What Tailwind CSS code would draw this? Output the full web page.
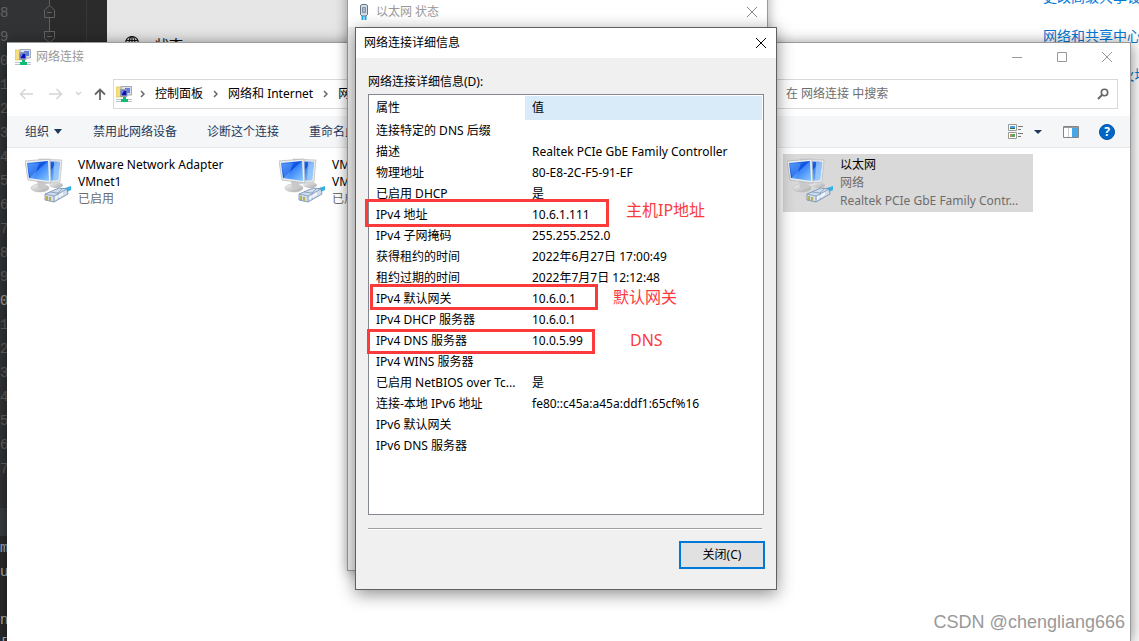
<!DOCTYPE html>
<html lang="zh-CN">
<head>
<meta charset="utf-8">
<title>网络连接</title>
<script src="https://cdn.jsdelivr.net/npm/@tailwindcss/browser@4"></script>
</head>
<body class="relative h-screen overflow-hidden bg-white font-['Noto_Sans','Noto_Sans_CJK_SC',sans-serif] text-[12px] leading-4 text-black">

<svg class="absolute h-0 w-0" aria-hidden="true">
  <defs>
    <linearGradient id="scr" x1="0" y1="0" x2="1" y2="1"><stop offset="0" stop-color="#4a94ff"/><stop offset=".45" stop-color="#0a50e0"/><stop offset=".5" stop-color="#3b86f8"/><stop offset="1" stop-color="#8ccbff"/></linearGradient>
    <linearGradient id="base" x1="0" y1="0" x2="1" y2="1"><stop offset="0" stop-color="#f4f4f4"/><stop offset="1" stop-color="#a9a9a9"/></linearGradient>
  </defs>
  <symbol id="adapter" viewBox="0 0 48 48">
    <ellipse cx="31" cy="27" rx="7" ry="3" fill="url(#base)"/>
    <path d="M14 1 37 2 35 24 17 26z" fill="#e4e6e8" stroke="#b4b8bc" stroke-width=".6"/>
    <path d="M16 3 35 4 33 22 18 23z" fill="url(#scr)"/>
    <path d="M29 4h6l-2 18-5 1z" fill="#a9d3fb" opacity=".7"/>
    <ellipse cx="15" cy="30" rx="9" ry="4" fill="url(#base)" stroke="#b5b5b5" stroke-width=".5"/>
    <path d="M12 23h8v7h-7z" fill="#c9c9c9"/>
    <path d="M0 3 25 1 26 25 3 22z" fill="#eceeef" stroke="#aeb2b6" stroke-width=".7"/>
    <path d="M2 5 23 3 24 23 4 20z" fill="url(#scr)"/>
    <path d="M3 6 14 5 9 20 5 20z" fill="#6caeff" opacity=".45"/>
    <path d="M37 31 46 28v4l-8 4z" fill="#32b1e2"/>
    <path d="M20 36 34 30 42 31 43 36 29 44 20 42z" fill="#cfdcec" stroke="#6e89ad" stroke-width=".8"/>
    <path d="M20 36 29 38 42 31M29 38v6M25 34l8 1 4-4M33 35v6" fill="none" stroke="#7e98ba" stroke-width=".8"/>
    <path d="M21 38h2v4h-2zm3 1h2v4h-2z" fill="#b9ae55"/>
    <path d="m30 39 8-5v3l-8 5z" fill="#fff" opacity=".7"/>
  </symbol>
  <symbol id="netfolder" viewBox="0 0 16 16">
    <path d="M0 1h6l1 1h3v9H0z" fill="#f5df7e" stroke="#d6b84e" stroke-width=".6"/>
    <path d="M5 .5h10.5V9H9L5 7z" fill="#dcdfe5" stroke="#8e97a8" stroke-width=".8"/>
    <path d="M9 2h5v5H9z" fill="#5a7fe0"/>
    <path d="M4.500 3.500h6.500v7H4.500z" fill="#c9cfde" stroke="#7d879b" stroke-width=".7"/>
    <path d="M5.500 4.500h5v5h-5z" fill="#0914b0"/>
    <path d="M6 5h2L6 8z" fill="#6c8df0"/>
    <path d="M7 11h3v2h2v3H5v-3h2z" fill="#12bb74"/>
    <path d="M0 13.500h5M12 13.500h4M0 15.500h5M12 15.500h4" stroke="#a8b5b9" stroke-width=".8"/>
  </symbol>
  <symbol id="chev" viewBox="0 0 5 8"><path d="m1 1 3 3-3 3" fill="none" stroke="#666" stroke-width="1.500"/></symbol>
</svg>

<!-- code editor -->
<div class="absolute inset-y-0 left-0 w-[107px] bg-[#2b2b2b] font-['Liberation_Mono',monospace] text-[14px] leading-6 text-[#606366]">
  <div class="flex h-[508px]">
    <div class="flex w-[50px] flex-col bg-[#313335] pt-px">
      <span>8</span><span>9</span><span>0</span><span>1</span><span>2</span><span>3</span><span>4</span><span>5</span><span>6</span><span>7</span><span>8</span><span>9</span><span class="text-[#a4a3a3]">0</span><span>1</span><span>2</span><span>3</span><span>4</span><span>5</span><span>6</span><span>7</span>
    </div>
    <div class="w-[37px] border-r border-[#373737]"></div>
  </div>
  <div class="h-7 bg-[#3a3e40]"></div>
  <div class="flex flex-col text-[#a9b7c6]"><span>m</span><span>u</span><span>&nbsp;</span><span>n</span><span>[</span></div>
  <svg class="absolute top-0 left-[43px] h-[43px] w-3" viewBox="0 0 12 43" fill="none" stroke="#606366"><path d="M6.500 0v5M1.500 17.500V10l5-4.500 5 4.500v7.500zM4 12.500h5M6.500 18v13M1.500 31.500h10v7l-5 4-5-4zM4 36.500h5"/></svg>
</div>

<!-- settings -->
<div class="absolute inset-y-0 right-0 left-[107px] flex justify-between bg-white text-[14px] leading-5">
  <div class="flex w-[241px] items-start gap-[15px] bg-[#e6e6e6] pt-[35px] pl-[17px]">
    <svg class="h-4 w-4" viewBox="0 0 16 16" fill="none" stroke="#111" stroke-width="1.200"><circle cx="8" cy="8" r="6.500"/><ellipse cx="8" cy="8" rx="3" ry="6.500"/><path d="M2 5.500h12M2 10.500h12M8 1v14"/></svg>
    <span>状态</span>
  </div>
  <div class="-mt-[13px] flex w-24 flex-col gap-[19px] whitespace-nowrap text-[#0078d7]">
    <a href="#">更改高级共享设置</a>
    <a href="#">网络和共享中心</a>
    <a href="#">Windows 防火墙</a>
  </div>
</div>

<!-- explorer window -->
<section class="absolute top-[42px] right-2 bottom-0 left-[7px] flex flex-col border-t border-r border-[#9a9a9a] bg-white shadow-[0_2px_14px_rgba(0,0,0,0.5)]">
  <header class="flex h-7 items-center pl-2 text-[#999]">
    <svg class="mr-[5px] h-4 w-4"><use href="#netfolder"/></svg>
    <h1 class="flex-1">网络连接</h1>
    <div class="flex gap-[35px] pr-[18px]">
      <button aria-label="最小化"><svg class="h-[10px] w-[10px]" fill="none" stroke="#999"><path d="M0 5.500h10"/></svg></button>
      <button aria-label="最大化"><svg class="h-[10px] w-[10px]" fill="none" stroke="#999"><path d="M.5.5h9v9h-9z"/></svg></button>
      <button aria-label="关闭"><svg class="h-[10px] w-[10px]" fill="none" stroke="#999"><path d="m0 0 10 10M10 0 0 10"/></svg></button>
    </div>
  </header>
  <nav class="flex h-[45px] items-center pr-3 pl-3">
    <button aria-label="后退"><svg class="h-3 w-[14px]" fill="none" stroke="#d5d5d5" stroke-width="1.500"><path d="M14 6H1.500M6.500 1l-5 5 5 5"/></svg></button>
    <button aria-label="前进" class="ml-4"><svg class="h-3 w-[14px]" fill="none" stroke="#d5d5d5" stroke-width="1.500"><path d="M0 6h12.500M7.500 1l5 5-5 5"/></svg></button>
    <button aria-label="最近" class="ml-3"><svg class="h-2 w-[7px]" fill="none" stroke="#d5d5d5" stroke-width="1.500"><path d="m1 2 2.500 2.500L6 2"/></svg></button>
    <button aria-label="上移" class="ml-3"><svg class="h-3 w-3" fill="none" stroke="#666" stroke-width="1.800"><path d="M6 12V1.500M1 6.500l5-5 5 5"/></svg></button>
    <div class="ml-[7px] flex h-[30px] flex-1 items-center overflow-hidden border border-[#d9d9d9] pl-[2px] whitespace-nowrap">
      <svg class="h-4 w-4"><use href="#netfolder"/></svg>
      <svg class="ml-2 h-2 w-[5px]"><use href="#chev"/></svg>
      <a href="#" class="ml-[10px]">控制面板</a>
      <svg class="ml-[10px] h-2 w-[5px]"><use href="#chev"/></svg>
      <a href="#" class="ml-[10px]">网络和 Internet</a>
      <svg class="ml-[10px] h-2 w-[5px]"><use href="#chev"/></svg>
      <a href="#" class="ml-[10px]">网络连接</a>
    </div>
    <label class="ml-3 flex h-[30px] w-[350px] items-center border border-[#d9d9d9] pr-2 pl-[17px]">
      <input type="search" aria-label="搜索" placeholder="在 网络连接 中搜索" class="min-w-0 flex-1 outline-none placeholder:text-[#6d6d6d]">
      <svg class="h-3 w-3" fill="none" stroke="#666"><circle cx="7.500" cy="4.500" r="3.200" stroke-width="1.600"/><path d="M5 7 1 11" stroke-width="2"/></svg>
    </label>
  </nav>
  <div class="flex h-8 items-center border-b border-[#e5e8eb] bg-[#f5f6f7] pr-[15px] pl-[18px] text-[#1e395b]">
    <button class="flex items-center gap-[5px]">组织<svg class="h-[5px] w-2" fill="#1e395b"><path d="M0 0h8L4 5z"/></svg></button>
    <button class="ml-[31px]">禁用此网络设备</button>
    <button class="ml-[30px]">诊断这个连接</button>
    <button class="ml-[30px]">重命名此连接</button>
    <div class="ml-auto flex items-center">
      <button aria-label="视图"><svg class="h-[15px] w-4"><path d="M.5.500h8v6h-8zM.5 8.500h8v6h-8z" fill="#fff" stroke="#999"/><path d="M2 2h5v3H2z" fill="#4a9fe0"/><path d="M2 4h5v1H2z" fill="#2d7348"/><path d="M2 10h3v3H2z" fill="#c58a50"/><path d="M4 10h3v3H4z" fill="#5aa860"/><path d="M10 2.500h5M10 5.500h3M10 9.500h5M10 12.500h3" stroke="#777"/></svg></button>
      <button aria-label="更多视图" class="ml-[10px]"><svg class="h-1 w-2" fill="#1e395b"><path d="M0 0h8L4 4z"/></svg></button>
      <button aria-label="预览窗格" class="ml-[21px]"><svg class="h-3 w-4"><path d="M.5.500h15v11H.500z" fill="#fff" stroke="#858585"/><path d="M1 1h14v1H1z" fill="#999"/><path d="M5.500 2v9" stroke="#ccc"/><path d="M9 2h6v9H9z" fill="#45a6e8"/></svg></button>
      <button aria-label="帮助" class="ml-5 h-4 w-4 rounded-full border border-[#0052a5] bg-[#0067c8] text-[12px] leading-[14px] font-bold text-white">?</button>
    </div>
  </div>
  <main class="grid grid-cols-[repeat(4,250px)] gap-1 py-[6px] pl-[14px]">
    <article class="flex h-[58px] gap-[5px] pl-1"><svg class="mt-1 h-12 w-12 shrink-0"><use href="#adapter"/></svg>
      <div class="min-w-0 pt-[2px] leading-[17px]"><p class="w-[170px]">VMware Network Adapter VMnet1</p><p class="text-[#6d6d6d]">已启用</p></div></article>
    <article class="flex h-[58px] gap-[5px] pl-1"><svg class="mt-1 h-12 w-12 shrink-0"><use href="#adapter"/></svg>
      <div class="min-w-0 pt-[2px] leading-[17px]"><p class="w-[170px]">VMware Network Adapter VMnet8</p><p class="text-[#6d6d6d]">已启用</p></div></article>
    <article class="col-start-4 flex h-[58px] gap-[5px] bg-[#d9d9d9] pl-1"><svg class="mt-1 h-12 w-12 shrink-0"><use href="#adapter"/></svg>
      <div class="min-w-0 pt-[2px] leading-[18px]"><p>以太网</p><p class="text-[#6d6d6d]">网络</p><p class="truncate text-[#6d6d6d]">Realtek PCIe GbE Family Contr...</p></div></article>
  </main>
</section>

<!-- status window -->
<section class="absolute -top-5 left-[347px] h-[591px] w-[421px] border border-[#999] bg-[#f0f0f0] shadow-[0_2px_12px_rgba(0,0,0,0.35)]">
  <header class="flex h-[46px] items-center bg-white px-[10px] pt-4 text-[#999]">
    <svg class="mr-[6px] h-[17px] w-3" fill="none"><path d="M2.500 1.500 4 .5h4l1.500 1v9L8 12H4l-1.500-1.500z" fill="#d4dce8" stroke="#66778c"/><path d="M4.500 3.500h3v5h-3zM6 4v4" stroke="#8593a8"/><path d="M4.500 12v4M7.500 12v4" stroke="#22a7df" stroke-width="2"/></svg>
    <h2 class="flex-1">以太网 状态</h2>
    <button aria-label="关闭"><svg class="h-[10px] w-[10px]" fill="none" stroke="#888"><path d="m0 0 10 10M10 0 0 10"/></svg></button>
  </header>
</section>

<!-- details dialog -->
<section role="dialog" aria-labelledby="dlg" class="absolute top-[27px] left-[355px] w-[422px] border border-[#606060] bg-[#f0f0f0] shadow-[0_4px_16px_rgba(0,0,0,0.45)]">
  <header class="flex h-[30px] items-center justify-between bg-white pr-[10px] pl-2">
    <h2 id="dlg">网络连接详细信息</h2>
    <button aria-label="关闭"><svg class="h-[10px] w-[10px]" fill="none" stroke="#000"><path d="m0 0 10 10M10 0 0 10"/></svg></button>
  </header>
  <div class="px-3 pt-4 pb-5">
    <h3 id="lst" class="mb-1">网络连接详细信息(D):</h3>
    <div class="h-[421px] border border-[#828790] bg-white p-px pl-0">
      <table aria-labelledby="lst" class="w-full table-fixed text-left">
        <thead><tr class="h-6"><th class="w-[156px] px-0 pl-[7px] font-normal">属性</th><th class="bg-[#d9ebf9] pl-[7px] font-normal">值</th></tr></thead>
        <tbody class="[&_td]:truncate [&_td]:pl-[7px] [&_tr]:h-[21px]">
          <tr><td>连接特定的 DNS 后缀</td><td></td></tr>
          <tr><td>描述</td><td>Realtek PCIe GbE Family Controller</td></tr>
          <tr><td>物理地址</td><td>80-E8-2C-F5-91-EF</td></tr>
          <tr><td>已启用 DHCP</td><td>是</td></tr>
          <tr><td>IPv4 地址</td><td>10.6.1.111</td></tr>
          <tr><td>IPv4 子网掩码</td><td>255.255.252.0</td></tr>
          <tr><td>获得租约的时间</td><td>2022年6月27日 17:00:49</td></tr>
          <tr><td>租约过期的时间</td><td>2022年7月7日 12:12:48</td></tr>
          <tr><td>IPv4 默认网关</td><td>10.6.0.1</td></tr>
          <tr><td>IPv4 DHCP 服务器</td><td>10.6.0.1</td></tr>
          <tr><td>IPv4 DNS 服务器</td><td>10.0.5.99</td></tr>
          <tr><td>IPv4 WINS 服务器</td><td></td></tr>
          <tr><td>已启用 NetBIOS over Tc...</td><td>是</td></tr>
          <tr><td>连接-本地 IPv6 地址</td><td>fe80::c45a:a45a:ddf1:65cf%16</td></tr>
          <tr><td>IPv6 默认网关</td><td></td></tr>
          <tr><td>IPv6 DNS 服务器</td><td></td></tr>
        </tbody>
      </table>
    </div>
    <div class="mt-[13px] mr-[2px] border-t border-b border-t-[#a0a0a0] border-b-white"></div>
    <div class="-mr-px flex justify-end pt-[11px]"><button class="h-7 w-[86px] border-2 border-[#0078d7] bg-[#e1e1e1]">关闭(C)</button></div>
  </div>

  <!-- red annotations over the list -->
  <div class="pointer-events-none absolute inset-0 text-[16px] leading-6 text-[#fb3a3c]">
    <div class="absolute top-[171px] left-[9px] h-7 w-[244px] border-3"></div>
    <span class="absolute top-[170px] left-[270px]">主机IP地址</span>
    <div class="absolute top-[256px] left-[14px] h-[26px] w-[228px] border-3"></div>
    <span class="absolute top-[257px] left-[257px]">默认网关</span>
    <div class="absolute top-[301px] left-[11px] h-[25px] w-[228px] border-3"></div>
    <span class="absolute top-[300px] left-[274px]">DNS</span>
  </div>
</section>

<p class="absolute right-[14px] bottom-[7px] font-['Liberation_Sans',sans-serif] text-[18px] leading-6 text-[#999]">CSDN @chengliang666</p>
</body>
</html>
